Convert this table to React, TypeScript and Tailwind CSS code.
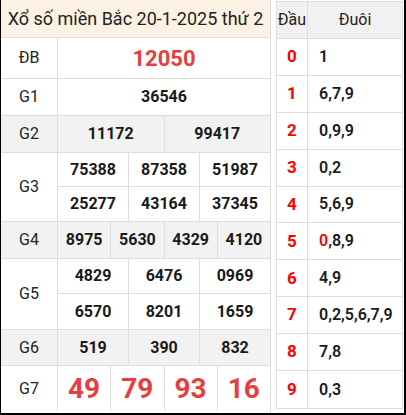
const rows: { label: string; cells: string[][]; gray?: boolean; big?: 'db' | 'g7'; h: number[] }[] = [
  { label: 'ĐB', cells: [['12050']], big: 'db', h: [41] },
  { label: 'G1', cells: [['36546']], h: [37] },
  { label: 'G2', cells: [['11172', '99417']], gray: true, h: [37] },
  { label: 'G3', cells: [['75388', '87358', '51987'], ['25277', '43164', '37345']], h: [35, 35] },
  { label: 'G4', cells: [['8975', '5630', '4329', '4120']], gray: true, h: [37] },
  { label: 'G5', cells: [['4829', '6476', '0969'], ['6570', '8201', '1659']], h: [36, 36] },
  { label: 'G6', cells: [['519', '390', '832']], gray: true, h: [36] },
  { label: 'G7', cells: [['49', '79', '93', '16']], big: 'g7', h: [46] },
];

const loto: [string, React.ReactNode][] = [
  ['0', '1'],
  ['1', '6,7,9'],
  ['2', '0,9,9'],
  ['3', '0,2'],
  ['4', '5,6,9'],
  ['5', <><span className="text-[#ff0000]">0</span>,8,9</>],
  ['6', '4,9'],
  ['7', '0,2,5,6,7,9'],
  ['8', '7,8'],
  ['9', '0,3'],
];

export default function App() {
  return (
    <div className="w-[406px] h-[415px] bg-white border-l border-r-2 border-b-2 border-black flex font-['Roboto',sans-serif] text-[#1a1a1a] overflow-hidden">
      {/* kết quả */}
      <div className="w-[270px] flex flex-col border-r border-[#dddddd]">
        <div className="h-[38px] bg-[#fdf1e5] border-b border-[#dddddd] flex items-center justify-center text-[18px] text-[#222]">
          Xổ số miền Bắc 20-1-2025 thứ 2
        </div>
        {rows.map((r) => (
          <div key={r.label} className={`flex border-b border-[#dddddd] last:border-b-0 ${r.gray ? 'bg-[#f2f2f2]' : ''}`}>
            <div className="w-[57px] border-r border-[#dddddd] flex items-center justify-center text-[16px] text-[#222]">
              {r.label}
            </div>
            <div className="flex-1 flex flex-col">
              {r.cells.map((line, i) => (
                <div
                  key={i}
                  style={{ height: r.h[i] - 1 }}
                  className={`flex ${i < r.cells.length - 1 ? 'border-b border-[#dddddd]' : ''}`}
                >
                  {line.map((n, j) => (
                    <div
                      key={j}
                      className={`flex-1 flex items-center justify-center font-bold ${j > 0 ? 'border-l border-[#dddddd]' : ''} ${
                        r.big === 'db'
                          ? 'text-[22px] text-[#e53f3f]'
                          : r.big === 'g7'
                          ? 'text-[28px] text-[#e53f3f]'
                          : 'text-[16px]'
                      }`}
                    >
                      {n}
                    </div>
                  ))}
                </div>
              ))}
            </div>
          </div>
        ))}
      </div>

      {/* loto đầu đuôi */}
      <div className="ml-[5px] mt-[1px] w-[127px] h-[408px] border border-[#dddddd] flex flex-col">
        <div className="h-[37px] bg-[#f1f1f1] border-b border-[#dddddd] flex text-[16px] text-[#222]">
          <div className="w-[31px] border-r border-[#dddddd] flex items-center justify-center">Đầu</div>
          <div className="flex-1 flex items-center justify-center">Đuôi</div>
        </div>
        {loto.map(([d, t]) => (
          <div key={d} className="h-[37px] flex border-b border-[#dddddd] last:border-b-0">
            <div className="w-[31px] border-r border-[#dddddd] flex items-center justify-center font-bold text-[17px] text-[#ff0000]">
              {d}
            </div>
            <div className="flex-1 flex items-center pl-[11px] font-semibold text-[16px]">{t}</div>
          </div>
        ))}
      </div>
    </div>
  );
}
